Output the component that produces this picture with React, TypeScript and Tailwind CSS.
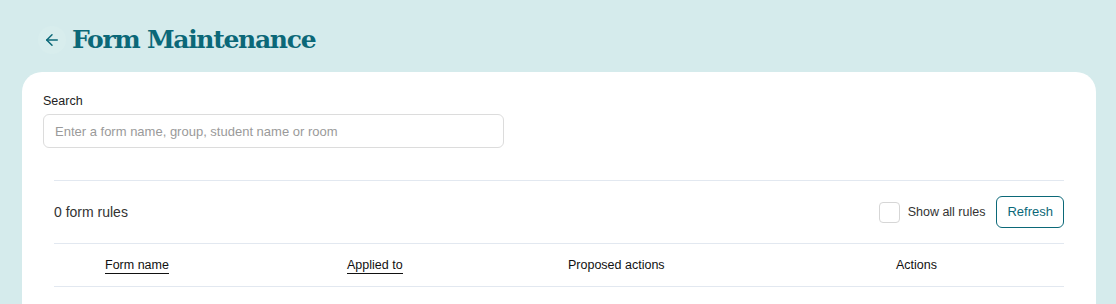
import { ArrowLeft } from 'lucide-react';

export default function App() {
  return (
    <div className="min-h-[304px] bg-[#d5ebec] font-['Liberation_Sans',Arial,sans-serif]">
      {/* header */}
      <div className="flex items-center h-[72px] pl-[38px] pt-[8px]">
        <button className="w-[28px] h-[28px] rounded-full bg-[#d8eded] flex items-center justify-center text-[#0b6878]">
          <ArrowLeft size={18} strokeWidth={2} />
        </button>
        <h1 className="ml-[6px] text-[25px] font-bold text-[#0b6878] font-['DejaVu_Serif',serif] tracking-[-1.3px]">
          Form Maintenance
        </h1>
      </div>

      {/* card */}
      <div className="ml-[22px] mr-[20px] bg-white rounded-t-[20px] min-h-[232px] px-[21px] pt-[21px]">
        <label className="block text-[12.5px] text-[#222] leading-[16px]">Search</label>
        <input
          className="mt-[5px] w-[461px] h-[34px] border border-[#dcdcdc] rounded-[6px] px-[11px] text-[13px] placeholder:text-[#9a9a9a] outline-none"
          placeholder="Enter a form name, group, student name or room"
        />

        <div className="mx-[11px] mt-[32px]">
          <div className="border-t border-[#e2e8f0] flex items-center justify-between py-[15px]">
            <span className="text-[14px] text-[#333]">0 form rules</span>
            <div className="flex items-center">
              <span className="w-[21px] h-[21px] border border-[#d6d6d6] rounded-[4px]" />
              <span className="ml-[8px] text-[12.5px] text-[#333]">Show all rules</span>
              <button className="ml-[11px] h-[32px] px-[10px] border border-[#0b6878] rounded-[6px] text-[13px] text-[#0b6878]">
                Refresh
              </button>
            </div>
          </div>
          <div className="border-t border-b border-[#e2e8f0] grid grid-cols-[51px_242px_221px_328px_1fr] items-center h-[44px] text-[12.5px] text-[#111]">
            <span />
            <span><span className="border-b-[1.5px] border-[#111] pb-[1px]">Form name</span></span>
            <span><span className="border-b-[1.5px] border-[#111] pb-[1px]">Applied to</span></span>
            <span>Proposed actions</span>
            <span>Actions</span>
          </div>
        </div>
      </div>
    </div>
  );
}
